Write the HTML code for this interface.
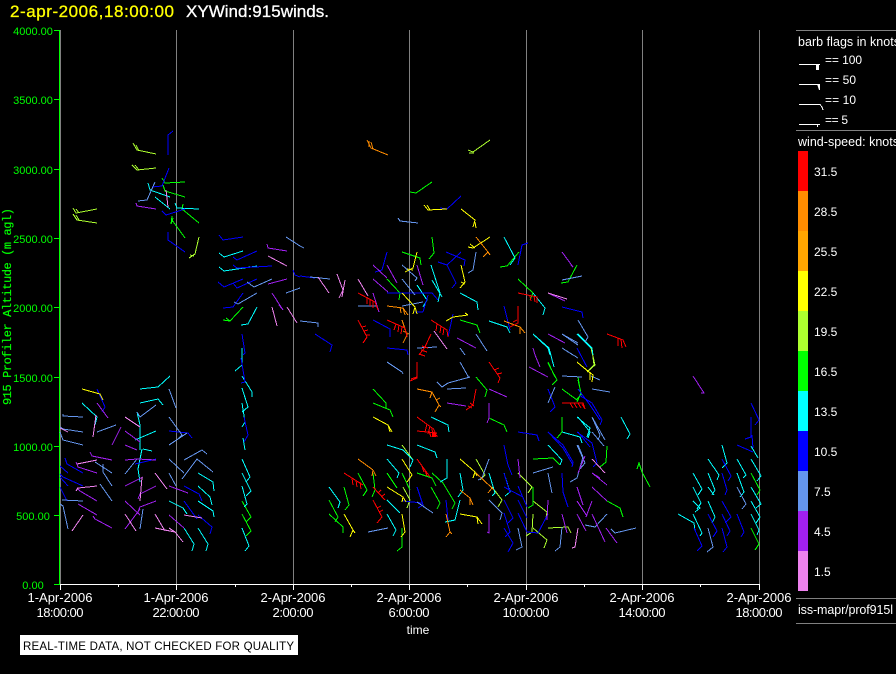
<!DOCTYPE html>
<html><head><meta charset="utf-8"><style>
html,body{margin:0;padding:0;background:#000;width:896px;height:674px;overflow:hidden}
svg{display:block}
text{font-family:"Liberation Sans",sans-serif}
.b path{fill:none;stroke-width:1;shape-rendering:crispEdges}
</style></head><body>
<svg width="896" height="674" viewBox="0 0 896 674" xmlns="http://www.w3.org/2000/svg">
<rect width="896" height="674" fill="#000"/>
<text x="10" y="17" font-size="17" fill="#ffff00" stroke="#ffff00" stroke-width=".3" textLength="164">2-apr-2006,18:00:00</text>
<text x="186" y="17" font-size="17" fill="#fff" stroke="#fff" stroke-width=".3" textLength="143">XYWind:915winds.</text>

<g stroke="#808080" stroke-width="1" shape-rendering="crispEdges">
<path d="M60.5 30V584M176.5 30V584M293.5 30V584M409.5 30V584M526.5 30V584M642.5 30V584M759.5 30V584"/>
<path d="M796 30.5H896M796 130.5H896M796 598.5H896M796 623.5H896"/>
</g>
<g stroke="#00ff00" stroke-width="1" shape-rendering="crispEdges">
<path d="M59.5 30V584M54 30.5H60M54 99.5H60M54 169.5H60M54 238.5H60M54 307.5H60M54 377.5H60M54 446.5H60M54 515.5H60M54 584.5H60"/>
</g>
<g stroke="#fff" stroke-width="1" shape-rendering="crispEdges">
<path d="M60 584.5H760M60.5 584V590M176.5 584V590M293.5 584V590M409.5 584V590M526.5 584V590M642.5 584V590M759.5 584V590M118.5 584V587M235.5 584V587M351.5 584V587M467.5 584V587M584.5 584V587M700.5 584V587"/>
</g>

<g fill="#00ff00" font-size="11" text-anchor="middle">
<text x="33" y="35">4000.00</text><text x="33" y="104">3500.00</text><text x="33" y="174">3000.00</text><text x="33" y="243">2500.00</text><text x="33" y="312">2000.00</text><text x="33" y="382">1500.00</text><text x="33" y="451">1000.00</text><text x="33" y="520">500.00</text><text x="33" y="589">0.00</text>
</g>
<text transform="translate(11,405) rotate(-90)" fill="#00ff00" stroke="#00ff00" stroke-width=".2" font-size="12" textLength="197" style="font-family:'Liberation Mono',monospace">915 Profiler Altitude (m agl)</text>

<g fill="#fff" font-size="13" text-anchor="middle">
<text x="60" y="602">1-Apr-2006</text><text x="176" y="602">1-Apr-2006</text><text x="293" y="602">2-Apr-2006</text><text x="409" y="602">2-Apr-2006</text><text x="526" y="602">2-Apr-2006</text><text x="642" y="602">2-Apr-2006</text><text x="759" y="602">2-Apr-2006</text>
<text x="60" y="617" textLength="47">18:00:00</text><text x="176" y="617" textLength="47">22:00:00</text><text x="293" y="617" textLength="41">2:00:00</text><text x="409" y="617" textLength="41">6:00:00</text><text x="526" y="617" textLength="47">10:00:00</text><text x="642" y="617" textLength="47">14:00:00</text><text x="759" y="617" textLength="47">18:00:00</text>
</g>
<text x="418" y="634" fill="#fff" font-size="12" text-anchor="middle">time</text>
<rect x="20" y="635" width="278" height="20" fill="#fff"/>
<text x="23" y="650" font-size="11.5" fill="#000" textLength="271">REAL-TIME DATA, NOT CHECKED FOR QUALITY</text>

<g fill="#fff" font-size="12.5">
<text x="798" y="46" textLength="102">barb flags in knots</text>
<text x="825" y="64" font-size="12" textLength="37">== 100</text>
<text x="825" y="84" font-size="12" textLength="31">== 50</text>
<text x="825" y="104" font-size="12" textLength="31">== 10</text>
<text x="825" y="124" font-size="12" textLength="23">== 5</text>
<text x="798" y="146" textLength="101">wind-speed: knots</text>
<text x="798" y="614" textLength="95">iss-mapr/prof915l</text>
</g>
<g stroke="#fff" fill="none" shape-rendering="crispEdges">
<path d="M799 64.5H820M799 84.5H820M799 104.5H820L822 107L823 110M799 124.5H820M817.5 124V127"/>
</g>
<rect x="816" y="64" width="3" height="6" fill="#fff"/>
<path d="M817 84H820V90H819Z" fill="#fff"/>

<g shape-rendering="crispEdges">
<rect x="798" y="151" width="10" height="40" fill="#ff0000"/>
<rect x="798" y="191" width="10" height="40" fill="#ff8c00"/>
<rect x="798" y="231" width="10" height="40" fill="#ffa500"/>
<rect x="798" y="271" width="10" height="40" fill="#ffff00"/>
<rect x="798" y="311" width="10" height="40" fill="#adff2f"/>
<rect x="798" y="351" width="10" height="40" fill="#00ff00"/>
<rect x="798" y="391" width="10" height="40" fill="#00ffff"/>
<rect x="798" y="431" width="10" height="40" fill="#0000ff"/>
<rect x="798" y="471" width="10" height="40" fill="#6495ed"/>
<rect x="798" y="511" width="10" height="40" fill="#a020f0"/>
<rect x="798" y="551" width="10" height="40" fill="#ee82ee"/>
</g>
<g fill="#fff" font-size="12">
<text x="814" y="176">31.5</text><text x="814" y="216">28.5</text><text x="814" y="256">25.5</text><text x="814" y="296">22.5</text><text x="814" y="336">19.5</text><text x="814" y="376">16.5</text><text x="814" y="416">13.5</text><text x="814" y="456">10.5</text><text x="814" y="496">7.5</text><text x="814" y="536">4.5</text><text x="814" y="576">1.5</text>
</g>

<g class="b">
<path stroke="#adff2f" d="M97 209L76 213L73 208M79 213L76 209M97 223L77 220L73 214M79 220L76 215M156 154L137 150L133 143M139 151L136 145M156 168L137 170L132 165M139 170L135 165M199 237L195 254L189 258M194 256L190 255M490 140L473 152L468 150M474 153L469 153M402 445L413 460M403 487L410 500L407 508M476 459L485 475L480 480M492 487L502 500L498 507M592 350L594 365L588 371M518 473L532 487L528 493M533 501L547 512L546 518M533 514L532 532L526 536M533 528L547 540L544 548M548 528L568 527L571 533M591 348L595 365L587 372"/>
<path stroke="#00ff00" d="M185 182L165 183L162 178M185 197L165 191L163 185M199 223L182 209L183 204M185 238L172 220M172 216L171 224L173 218M243 307L230 321L223 320M230 321L226 318M432 182L416 193L410 192M432 237L434 253L429 259M519 252L507 266L500 267M402 252L420 258L421 265M577 265L568 282L561 283M387 279L400 293L399 300M518 279L533 293L530 300M460 320L477 325L480 333M476 377L487 390L485 397M373 389L386 403L386 408M373 403L390 410L393 417M489 418L504 425L507 432M548 363L557 380L552 385M578 377L581 395L576 400M562 389L577 400M562 417L562 432L557 438M533 459L553 458L560 465M358 473L367 490L363 496M373 473L375 490L372 497M387 473L397 488M402 473L410 490M344 487L349 505L345 510M329 500L338 517L335 522M329 514L343 527L343 533M402 528L402 547L397 551M417 473L432 478L436 486M432 473L443 483L455 503L452 509M431 487L440 503L437 509M533 487L533 505L528 508M578 380L581 393L577 402M607 446L606 462L600 467M607 501L620 508L623 517M650 487L642 472L639 463L637 469M751 473L760 490L757 495M751 528L759 544L755 550M548 362L555 377M242 501L251 517L246 522M242 514L251 531L246 536"/>
<path stroke="#00ffff" d="M170 197L150 190L148 183M170 209L155 197M199 209L177 208L175 203M219 253L224 257L243 251M219 267L224 271L257 266M242 348L242 365L235 371M242 376L252 392L252 397M242 388L248 407L242 412M242 403L245 422L242 427M243 438L245 450M242 459L250 477L246 482M242 473L251 491L246 496M242 486L247 504L244 507M242 528L249 546L245 551M257 307L248 324L241 325M82 403L97 417L95 425M137 412L140 425L140 450M170 376L158 387L140 389M163 405L158 399L140 403M156 431L135 440M142 449L138 469L140 482M143 449L152 451M214 491L213 482L198 473M212 505L210 497L198 486M214 517L213 511L198 501M187 514L183 508L169 501M192 551L194 544L184 528M206 551L208 544L198 528M504 237L515 258L510 265M431 265L440 293L438 302M432 280L442 297M417 285L427 300L423 307M460 293L477 302L478 310M533 293L545 308L543 315M489 321L507 327L510 333M533 334L548 348L550 355M578 334L592 348L593 355M533 334L549 348L554 367M577 334L591 348M431 417L448 425L449 432M562 432L580 437L582 443M578 417L590 432L588 438M548 445L562 460L560 465M387 445L403 450L413 460L410 467M387 459L399 473L397 478M329 487L340 502L338 508M387 514L396 530L393 536M387 500L400 513M417 445L435 452L437 458M447 459L447 478L440 482M460 473L463 490L458 497M489 473L495 493L492 496M504 473L510 492L505 496M460 500L455 520L445 522M621 417L630 434L627 439M577 417L590 428L587 437M722 445L727 463L722 468M708 459L719 475L717 480M737 459L746 475L743 478M751 459L761 476L757 481M693 473L702 489L698 495M708 473L715 490L712 495M737 473L744 492L740 497M751 487L761 504L756 508M693 487L701 503L697 509M708 501L715 517L712 523M693 501L700 508L695 512M751 501L760 517L756 523M693 514L702 533L700 536M751 514L759 530L757 535M678 514L694 523L695 531M751 446L758 458M708 487L714 495"/>
<path stroke="#0000ff" d="M168 155L168 135L173 131M169 168L162 186L152 187M185 209L166 215L162 211M185 252L168 240L168 232M243 237L223 240L219 235M257 251L237 260L233 257M272 266L237 268L233 265M243 279L224 287L218 282M257 279L237 288L233 283M293 270L295 275L300 277M243 293L233 307L223 308M242 334L245 353L243 355M241 358L245 382L241 383M244 417L248 435L244 442M97 389L105 407L102 412M169 431L188 433L192 438M83 473L67 464L65 458M83 486L63 477L60 474M68 486L60 477M68 473L60 466M67 501L60 487M156 459L135 464M202 501L199 494L184 486M197 519L184 501M210 534L212 527L198 515M461 196L447 209L440 208M387 252L382 270L375 272M461 252L447 265L438 262M446 252L465 260L464 266M528 243L522 245L518 265M447 265L456 283L452 288M300 276L315 278M387 293L417 293M438 300L432 293L417 293M423 312L428 295M415 312L423 312M562 307L582 312L583 318M504 306L510 330M453 314L448 337M373 320L390 329L390 337M315 334L332 345L330 352M387 348L407 350L408 355M577 348L587 367M518 432L537 435L539 441M548 389L555 407L550 412M578 389L590 405L600 420M579 395L592 403L602 420L600 425M548 432L563 448L573 465M578 432L590 447M504 445L508 465L512 475M504 473L510 493M562 473L563 492L568 507M417 487L423 505L418 508M403 501L422 503M446 500L448 520M504 500L513 518L508 523M504 513L510 532L505 537M504 528L513 543L508 552M518 486L527 507M518 500L527 518M518 513L527 532M504 487L523 497M548 514L538 533L527 532M577 432L592 443L597 463L593 467M548 432L563 445L573 462L572 467M751 403L759 420L755 425M751 417L751 437L745 439M752 435L753 448M737 445L753 452M722 459L731 476L728 481M722 473L727 490L725 495M722 501L731 517L725 523M722 514L730 531L727 536M737 514L744 532L741 537M694 528L702 546L697 551M722 528L727 547L723 552M708 514L717 531L713 537"/>
<path stroke="#6495ed" d="M155 182L147 200L138 201M300 246L286 237M304 248L300 246M272 279L254 287L247 282M300 288L286 293M257 293L238 304L234 302M116 425L97 432M83 417L63 416L63 414M83 432L63 429L60 427M83 445L63 440L60 432M156 405L140 417L137 412M176 408L169 389M169 417L182 435L177 440M169 445L187 433M207 454L202 450L184 460M213 472L197 459L182 479M184 473L169 459M176 486L169 473M112 473L95 462M112 486L103 472L103 464M112 501L100 484M83 501L62 500M68 529L63 506L60 504M137 459L125 474M143 509L140 529M418 223L400 221L398 218M476 252L473 270L468 273M582 276L562 280M402 265L417 278L415 281M402 279L415 295M310 277L330 279M358 306L377 306M402 306L423 302M300 321L318 323L318 327M476 334L487 351M417 348L437 347M460 348L465 355M562 334L578 343M562 348L573 355M578 345L562 334M578 358L562 348M591 376L600 380M578 320L588 337L585 342M470 377L448 383L442 387L437 382M466 388L447 389M469 378L460 362M387 362L402 372L403 374M562 376L582 377M555 387L548 403M592 389L610 392M417 502L433 513M553 467L533 473M548 473L552 493M578 445L583 457L577 478L570 482M592 417L605 440M592 432L604 446M489 459L482 478L478 480M489 500L502 513L500 520M518 528L522 547L516 550M562 527L560 547L555 551M388 528L368 532M592 417L600 435L598 440M577 445L585 463L580 469M607 514L595 527L585 525M636 528L615 533L611 529M737 487L746 504L742 509M708 528L713 547L707 552"/>
<path stroke="#a020f0" d="M156 209L137 206L136 203M287 251L268 248L267 244M287 279L268 284M272 293L283 310L279 305M97 403L108 418M121 427L112 445M125 431L140 442M125 445L137 450M112 460L92 456L90 452M97 473L78 467L76 462M97 501L80 491L77 488M97 515L78 504M112 528L95 519L93 516M156 460L137 459L125 460M143 477L125 486M156 486L140 494L138 499M156 501L140 507L137 514M140 515L125 501M140 509L125 529M188 493L169 486M184 528L169 515M562 252L573 267L571 265M373 265L387 278M387 265L397 283M417 265L423 285M373 279L388 292M373 293L379 312M548 293L565 301M548 334L565 343M457 338L476 348M533 348L535 355L540 367M529 367L548 377M489 389L507 397M447 403L466 406M489 403L489 418L487 423M518 459L520 478M585 456L578 473M592 473L607 485M592 487L607 501M577 487L583 505M592 501L586 517M577 501L587 516M577 514L586 531M592 514L605 542M606 528L617 543M489 514L489 533L487 532M548 500L547 520M562 514L567 533M693 376L704 393L701 393M592 473L600 478"/>
<path stroke="#ee82ee" d="M166 190L168 207M96 415L93 437M68 432L60 428M125 417L140 427M287 266L268 256M287 307L297 323M272 307L277 326M97 460L77 464M97 486L78 488L76 491M83 515L72 531M142 477L140 501M125 514L136 531M155 473L167 489M202 518L184 515M169 528L175 532L183 542M155 528L175 532M155 514L165 531M318 277L329 293M337 274L343 290L339 298M345 280L342 297M358 279L368 296M548 293L567 299M434 331L447 349M592 459L605 473M578 528L575 547L572 548"/>
<path stroke="#ffff00" d="M82 389L100 394L103 400M447 209L428 210L424 205M430 210L427 205M461 209L475 220L473 227M475 222L476 228M490 237L473 248L468 247M475 248L470 244M417 252L413 268L405 272M413 270L407 269M461 265L465 282L460 288M465 284L461 282M402 293L415 307L413 314M415 307L417 314M468 315L453 317L446 321M468 315L465 313M373 417L388 425L392 432M388 425L390 432M402 459L412 475L407 482M387 487L403 497L402 502M403 497L406 502M344 514L353 530L350 537M353 530L355 533M402 514L405 532L401 537M460 459L475 472L473 478M475 472L477 476M460 514L477 517L482 524M477 517L478 524M578 363L593 375L592 382M577 362L590 373L590 380"/>
<path stroke="#ff8c00" d="M388 155L371 148L367 140M373 149L371 142M369 147L369 141M476 237L488 252L483 257M488 252L490 255M387 306L403 308L408 315M403 308L405 315M400 307L401 313M504 321L520 327L525 333M520 327L520 334M402 320L407 335L403 343M403 331L409 334M417 389L432 392L439 405L435 412M432 392L430 398M436 400L440 398M439 405L441 407M358 459L373 470M373 470L372 476M373 470L376 476M476 473L492 488L488 493M492 488L494 490M460 490L470 498L473 505M470 498L470 505M446 514L450 532L446 537M450 532L452 534"/>
<path stroke="#ff0000" d="M358 293L375 302L378 310M367 297L367 304M370 299L370 306M373 301L373 308M387 320L405 328L407 337M396 324L394 330M399 325L398 332M402 327L401 334M431 320L447 330L448 337M437 324L436 331M441 326L440 333M444 328L443 335M358 320L367 337L363 343M362 327L366 326M364 331L368 330M366 335L370 335M431 334L425 347L419 355M422 346L428 348M421 350L427 352M419 354L425 356M518 293L537 297L537 303M530 296L531 301M534 296L535 302M518 306L518 323L510 327M513 322L517 320M514 325L518 323M489 362L500 378L498 383M494 370L499 368M497 374L502 373M476 389L473 405L466 410M470 403L474 406M468 406L472 408M607 334L623 340L626 347M618 338L618 346M621 339L622 348M417 362L417 378L410 381M411 379L417 377M562 403L583 403L585 409M570 403L573 408M574 403L577 408M578 403L581 408M344 473L363 485M352 478L353 485M356 480L357 487M360 482L361 489M373 487L385 500M378 493L381 490M381 497L385 494M373 500L382 517L377 523M377 508L381 506M379 512L383 510M417 459L430 477M422 466L424 472M425 470L427 476M417 417L432 428L433 437M427 424L425 432M430 426L428 434M417 431L437 433M433 432L437 436L433 436M429 431L431 437M433 428L436 434M582 404L585 409"/>
</g>
<rect x="432" y="433" width="4" height="4" fill="#ff0000"/>
</svg>
</body></html>
